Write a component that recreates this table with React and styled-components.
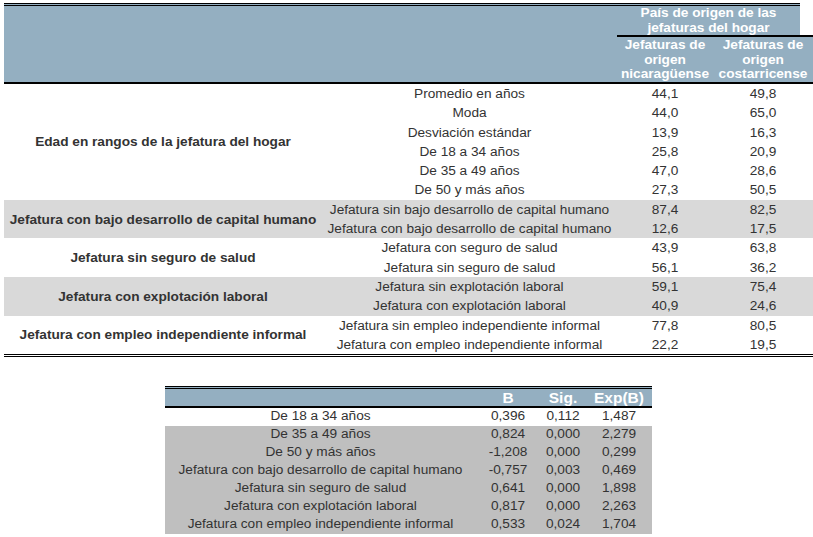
import React from "react";
import styled, { createGlobalStyle } from "styled-components";

const HEAD_BG = "#94afc1";
const SHADE_1 = "#d9d9d9";
const SHADE_2 = "#bfbfbf";
const INK = "#333333";

const Global = createGlobalStyle`
  html, body {
    margin: 0;
    padding: 0;
    background: #ffffff;
    overflow: hidden;
  }
  body {
    font-family: "Liberation Sans", Arial, sans-serif;
    font-size: 13.67px;
    color: ${INK};
  }
`;

const Page = styled.div`
  padding: 3px 0 0 4px;
  width: 809px;
`;

/* ---------- first table ---------- */

const Table = styled.section`
  width: 809px;
`;

const Head = styled.div`
  display: grid;
  grid-template-columns: 318px 295px 96px 87px 13px;
  grid-template-rows: auto auto;
  border-bottom: 2px solid #000;
  color: #ffffff;
  font-weight: 700;
  font-size: 13.67px;
  line-height: 14.5px;
  text-align: center;
`;

const HeadBlank = styled.div`
  grid-column: 1 / 3;
  grid-row: 1 / 3;
  background: ${HEAD_BG};
  border-top: 3px double #000;
`;

const GroupHead = styled.div`
  grid-column: 3 / 5;
  grid-row: 1;
  height: 29px;
  background: ${HEAD_BG};
  border-top: 3px double #000;
  border-bottom: 2px solid #000;
`;

const HeadCorner = styled.div`
  grid-column: 5;
  grid-row: 1;
  height: 29px;
  background: #ffffff;
  border-top: 3px solid transparent;
  border-bottom: 2px solid #000;
`;

const SubHead = styled.div`
  grid-row: 2;
  grid-column: ${(p) => p.$col};
  background: ${HEAD_BG};
  padding: 1px 0 0.5px;
  white-space: nowrap;
`;

const Body = styled.div`
  border-bottom: 3px double #000;
`;

const Group = styled.div`
  display: grid;
  grid-template-columns: 318px 1fr;
  background: ${(p) => (p.$shade ? SHADE_1 : "#ffffff")};
`;

const Category = styled.div`
  display: flex;
  align-items: center;
  justify-content: center;
  font-weight: 700;
  text-align: center;
  white-space: nowrap;
`;

const Rows = styled.div`
  display: flex;
  flex-direction: column;
`;

const Row = styled.div`
  display: grid;
  grid-template-columns: 295px 96px 100px;
  height: 19.3px;
  line-height: 19.3px;
  text-align: center;
  white-space: nowrap;
`;

/* ---------- second table ---------- */

const Table2 = styled.section`
  width: 487px;
  margin: 29px 0 0 161px;
`;

const Head2 = styled.div`
  display: grid;
  grid-template-columns: 311px 64px 46px 66px;
  height: 16.5px;
  line-height: 17px;
  background: ${HEAD_BG};
  border-top: 3px double #000;
  border-bottom: 2px solid #000;
  color: #ffffff;
  font-weight: 700;
  font-size: 15.5px;
  text-align: center;
  overflow: hidden;
`;

const Row2 = styled.div`
  display: grid;
  grid-template-columns: 311px 64px 46px 66px;
  box-sizing: border-box;
  height: 18px;
  line-height: 15px;
  padding-bottom: 3px;
  text-align: center;
  white-space: nowrap;
  background: ${(p) => (p.$shade ? SHADE_2 : "#ffffff")};
`;

const Caption = styled.p`
  margin: 0 0 0 161px;
  line-height: 15px;
  white-space: nowrap;
`;

const Source = styled.span`
  color: #4f81bd;
`;

const groups = [
  {
    label: "Edad en rangos de la jefatura del hogar",
    shade: false,
    rows: [
      ["Promedio en años", "44,1", "49,8"],
      ["Moda", "44,0", "65,0"],
      ["Desviación estándar", "13,9", "16,3"],
      ["De 18 a 34 años", "25,8", "20,9"],
      ["De 35 a 49 años", "47,0", "28,6"],
      ["De 50 y más años", "27,3", "50,5"],
    ],
  },
  {
    label: "Jefatura con bajo desarrollo de capital humano",
    shade: true,
    rows: [
      ["Jefatura sin bajo desarrollo de capital humano", "87,4", "82,5"],
      ["Jefatura con bajo desarrollo de capital humano", "12,6", "17,5"],
    ],
  },
  {
    label: "Jefatura sin seguro de salud",
    shade: false,
    rows: [
      ["Jefatura con seguro de salud", "43,9", "63,8"],
      ["Jefatura sin seguro de salud", "56,1", "36,2"],
    ],
  },
  {
    label: "Jefatura con explotación laboral",
    shade: true,
    rows: [
      ["Jefatura sin explotación laboral", "59,1", "75,4"],
      ["Jefatura con explotación laboral", "40,9", "24,6"],
    ],
  },
  {
    label: "Jefatura con empleo independiente informal",
    shade: false,
    rows: [
      ["Jefatura sin empleo independiente informal", "77,8", "80,5"],
      ["Jefatura con empleo independiente informal", "22,2", "19,5"],
    ],
  },
];

const model = [
  ["De 18 a 34 años", "0,396", "0,112", "1,487"],
  ["De 35 a 49 años", "0,824", "0,000", "2,279"],
  ["De 50 y más años", "-1,208", "0,000", "0,299"],
  ["Jefatura con bajo desarrollo de capital humano", "-0,757", "0,003", "0,469"],
  ["Jefatura sin seguro de salud", "0,641", "0,000", "1,898"],
  ["Jefatura con explotación laboral", "0,817", "0,000", "2,263"],
  ["Jefatura con empleo independiente informal", "0,533", "0,024", "1,704"],
];

export default function App() {
  return (
    <>
      <Global />
      <Page>
        <Table>
          <Head>
            <HeadBlank />
            <GroupHead>
              País de origen de las
              <br />
              jefaturas del hogar
            </GroupHead>
            <HeadCorner />
            <SubHead $col="3">
              Jefaturas de
              <br />
              origen
              <br />
              nicaragüense
            </SubHead>
            <SubHead $col="4 / 6">
              Jefaturas de
              <br />
              origen
              <br />
              costarricense
            </SubHead>
          </Head>
          <Body>
            {groups.map((g) => (
              <Group key={g.label} $shade={g.shade}>
                <Category>{g.label}</Category>
                <Rows>
                  {g.rows.map((r) => (
                    <Row key={r[0]}>
                      <span>{r[0]}</span>
                      <span>{r[1]}</span>
                      <span>{r[2]}</span>
                    </Row>
                  ))}
                </Rows>
              </Group>
            ))}
          </Body>
        </Table>

        <Table2>
          <Head2>
            <span />
            <span>B</span>
            <span>Sig.</span>
            <span>Exp(B)</span>
          </Head2>
          {model.map((r, i) => (
            <Row2 key={r[0]} $shade={i > 0}>
              <span>{r[0]}</span>
              <span>{r[1]}</span>
              <span>{r[2]}</span>
              <span>{r[3]}</span>
            </Row2>
          ))}
        </Table2>
        <Caption>
          <Source>Fuente:</Source> Elaboración propia a partir de la Encuesta
          Nacional de Hogares (INEC, 2019).
        </Caption>
      </Page>
    </>
  );
}
